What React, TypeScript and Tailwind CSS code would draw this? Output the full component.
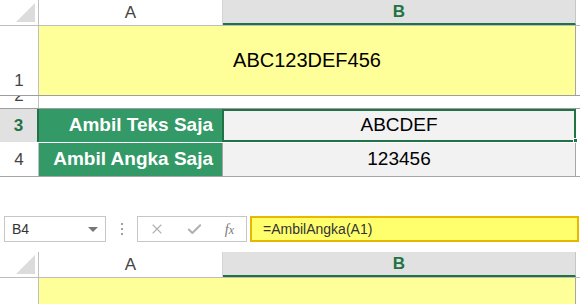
import { Check, X } from 'lucide-react';

const font = { fontFamily: '"Liberation Sans", Arial, sans-serif' };

function Corner() {
  return (
    <div className="relative h-full w-[39px] border-r border-[#c0c0c0] bg-white">
      <div className="absolute bottom-[3px] right-[3px] h-0 w-0 border-b-[19px] border-l-[19px] border-b-[#dcdcdc] border-l-transparent" />
    </div>
  );
}

function ColumnHeaders() {
  return (
    <div className="flex h-[26px] border-b border-[#bdbdbd]">
      <Corner />
      <div className="flex w-[184px] items-center justify-center border-r border-[#d4d4d4] bg-white text-[17px] text-[#444]">
        A
      </div>
      <div className="flex w-[353px] items-center justify-center border-b-2 border-r border-b-[#217346] border-r-[#c6c6c6] bg-[#e1e1e1] text-[17px] font-bold text-[#217346]">
        B
      </div>
      <div className="flex-1 bg-white" />
    </div>
  );
}

function FormulaBar() {
  return (
    <div className="flex h-[26px] items-center pl-[4px]">
      <div className="flex h-full w-[102px] items-center justify-between border border-[#c6c6c6] bg-white pl-[7px] pr-[7px] text-[14px] text-[#333]">
        <span>B4</span>
        <span className="h-0 w-0 border-x-[5px] border-t-[5px] border-x-transparent border-t-[#777]" />
      </div>
      <div className="flex w-[31px] flex-col items-center gap-[3px]">
        <span className="h-[2px] w-[2px] bg-[#a0a0a0]" />
        <span className="h-[2px] w-[2px] bg-[#a0a0a0]" />
        <span className="h-[2px] w-[2px] bg-[#a0a0a0]" />
      </div>
      <div className="flex h-full w-[110px] items-center justify-between border border-[#c6c6c6] bg-white pl-[11px] pr-[12px]">
        <X className="h-[16px] w-[16px] text-[#b0b0b0]" strokeWidth={1.6} />
        <Check className="h-[17px] w-[17px] text-[#b0b0b0]" strokeWidth={2.8} />
        <span className="text-[14px] italic text-[#777]" style={{ fontFamily: '"Liberation Serif", serif' }}>
          f<span className="text-[12px]">x</span>
        </span>
      </div>
      <div className="ml-[3px] mr-[1px] flex h-full flex-1 items-center border-2 border-[#e8b800] bg-[#ffff6e] pl-[11px] text-[14px] text-[#333]">
        =AmbilAngka(A1)
      </div>
    </div>
  );
}

export default function App() {
  return (
    <div className="relative h-[304px] w-[580px] overflow-hidden bg-white" style={font}>
      <ColumnHeaders />

      {/* row 1 */}
      <div className="flex h-[70px] border-b border-[#9e9e9e]">
        <div className="flex w-[39px] items-end justify-center border-r border-[#c0c0c0] pb-[2px] text-[17px] text-[#444]">
          1
        </div>
        <div className="flex w-[537px] items-center justify-center border-r border-[#a6a6a6] bg-[#ffff99] pb-[2px] text-[20px] text-black">
          ABC123DEF456
        </div>
        <div className="flex-1" />
      </div>

      {/* row 2, too short to show its label in full */}
      <div className="flex h-[13px] border-b border-[#9e9e9e]">
        <div className="relative w-[39px] overflow-hidden border-r border-[#c0c0c0] text-[17px] leading-none text-[#444]">
          <span className="absolute -top-[9px] left-0 right-0 text-center">2</span>
        </div>
        <div className="flex-1" />
      </div>

      {/* row 3 */}
      <div className="flex h-[34px] border-b border-white">
        <div className="flex w-[39px] items-center justify-center border-r-2 border-[#217346] bg-[#e1e1e1] text-[17px] font-bold text-[#217346]">
          3
        </div>
        <div className="flex w-[183px] items-center justify-end bg-[#339966] pr-[9px] text-[19px] font-bold text-white">
          Ambil Teks Saja
        </div>
        <div className="relative flex w-[354px] items-center justify-center border-2 border-[#217346] bg-[#f2f2f2] text-[19px] text-black">
          ABCDEF
          <div className="absolute -bottom-[3px] -right-[4px] h-[5px] w-[5px] border border-white bg-[#217346]" />
        </div>
        <div className="flex-1" />
      </div>

      {/* row 4 */}
      <div className="flex h-[34px] border-b border-[#a6a6a6]">
        <div className="flex w-[39px] items-center justify-center border-r border-[#c0c0c0] text-[17px] text-[#444]">
          4
        </div>
        <div className="flex w-[183px] items-center justify-end bg-[#339966] pr-[9px] text-[19px] font-bold text-white">
          Ambil Angka Saja
        </div>
        <div className="flex w-[354px] items-center justify-center border-l border-r border-[#a6a6a6] bg-[#f2f2f2] text-[19px] text-black">
          123456
        </div>
        <div className="flex-1" />
      </div>

      <div className="h-[39px]" />
      <FormulaBar />
      <div className="h-[10px]" />
      <ColumnHeaders />
      <div className="flex h-[30px]">
        <div className="w-[39px] border-r border-[#c0c0c0]" />
        <div className="w-[537px] border-r border-[#a6a6a6] bg-[#ffff99]" />
      </div>
    </div>
  );
}
